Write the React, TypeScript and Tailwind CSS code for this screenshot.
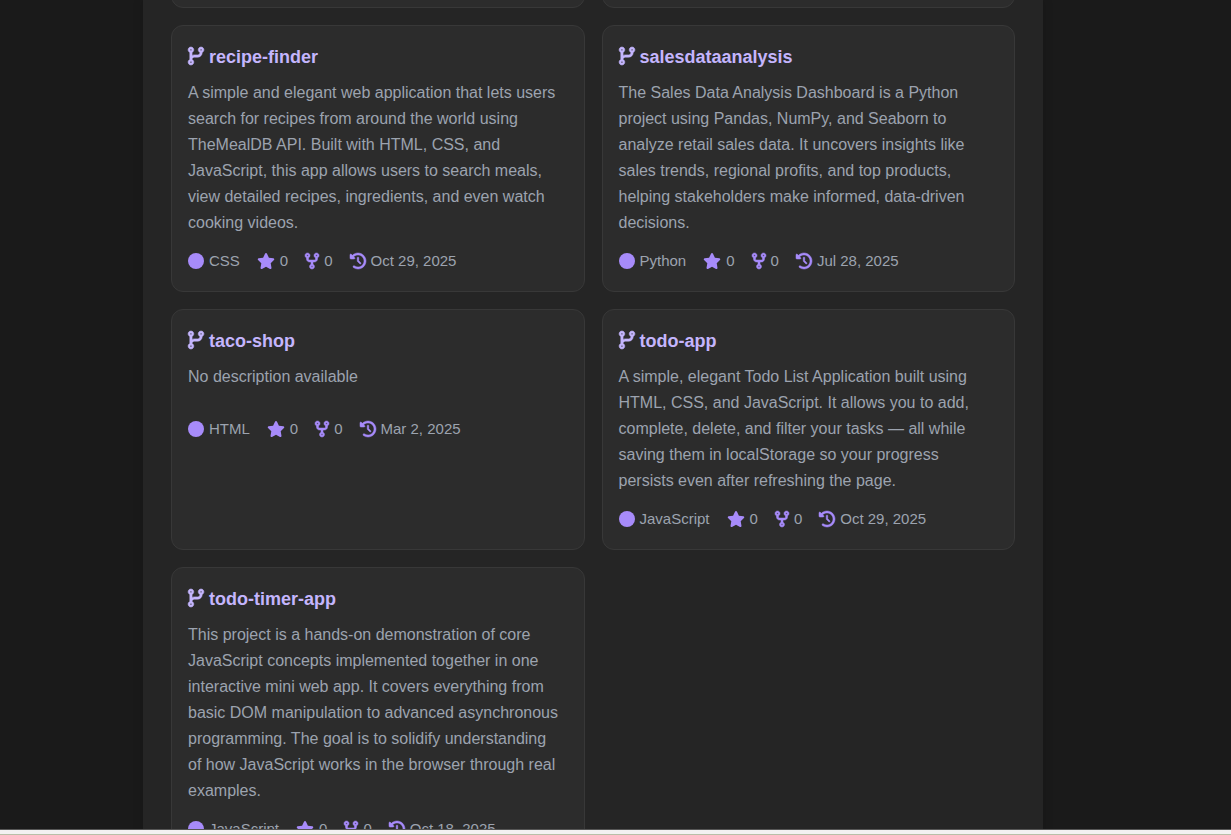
import {
  FaCircle,
  FaClockRotateLeft,
  FaCodeBranch,
  FaCodeFork,
  FaStar,
} from "react-icons/fa6";

type Repo = {
  name: string;
  description: string;
  language: string;
  stars: number;
  forks: number;
  updated: string;
};

const repos: Repo[] = [
  {
    name: "recipe-finder",
    description:
      "A simple and elegant web application that lets users search for recipes from around the world using TheMealDB API. Built with HTML, CSS, and JavaScript, this app allows users to search meals, view detailed recipes, ingredients, and even watch cooking videos.",
    language: "CSS",
    stars: 0,
    forks: 0,
    updated: "Oct 29, 2025",
  },
  {
    name: "salesdataanalysis",
    description:
      "The Sales Data Analysis Dashboard is a Python project using Pandas, NumPy, and Seaborn to analyze retail sales data. It uncovers insights like sales trends, regional profits, and top products, helping stakeholders make informed, data-driven decisions.",
    language: "Python",
    stars: 0,
    forks: 0,
    updated: "Jul 28, 2025",
  },
  {
    name: "taco-shop",
    description: "No description available",
    language: "HTML",
    stars: 0,
    forks: 0,
    updated: "Mar 2, 2025",
  },
  {
    name: "todo-app",
    description:
      "A simple, elegant Todo List Application built using HTML, CSS, and JavaScript. It allows you to add, complete, delete, and filter your tasks — all while saving them in localStorage so your progress persists even after refreshing the page.",
    language: "JavaScript",
    stars: 0,
    forks: 0,
    updated: "Oct 29, 2025",
  },
  {
    name: "todo-timer-app",
    description:
      "This project is a hands-on demonstration of core JavaScript concepts implemented together in one interactive mini web app. It covers everything from basic DOM manipulation to advanced asynchronous programming. The goal is to solidify understanding of how JavaScript works in the browser through real examples.",
    language: "JavaScript",
    stars: 0,
    forks: 0,
    updated: "Oct 18, 2025",
  },
];

function RepoCard({ repo }: { repo: Repo }) {
  return (
    <article className="rounded-xl border border-[#383838] bg-[#2c2c2c] px-4 pt-4 pb-[17px]">
      <h3 className="mb-2 text-lg leading-[30px] font-bold text-[#c4b5fd]">
        <a href={`#${repo.name}`} className="flex items-center gap-[5px]">
          <FaCodeBranch
            aria-hidden="true"
            strokeWidth={16}
            className="mb-[2px] h-[18px] w-4 shrink-0 overflow-visible"
          />
          {repo.name}
        </a>
      </h3>
      <p className="mb-3 min-h-10 pr-1 text-base leading-[26px] text-[#9ca3af]">
        {repo.description}
      </p>
      <ul className="flex flex-wrap gap-[17px] text-[15px] leading-[26px] text-[#9ca3af]">
        <li className="flex items-center gap-[5px]">
          <FaCircle aria-hidden="true" className="size-4 text-[#a78bfa]" />
          {repo.language}
        </li>
        <li className="flex items-center gap-[5px]" aria-label="Stars">
          <FaStar aria-hidden="true" className="h-4 w-[18px] text-[#a78bfa]" />
          {repo.stars}
        </li>
        <li className="flex items-center gap-[5px]" aria-label="Forks">
          <FaCodeFork
            aria-hidden="true"
            strokeWidth={16}
            className="h-4 w-[14px] overflow-visible text-[#a78bfa]"
          />
          {repo.forks}
        </li>
        <li className="flex items-center gap-[5px]" aria-label="Last updated">
          <FaClockRotateLeft
            aria-hidden="true"
            strokeWidth={16}
            className="size-4 overflow-visible text-[#a78bfa]"
          />
          {repo.updated}
        </li>
      </ul>
    </article>
  );
}

export default function App() {
  return (
    <div className="flex h-screen flex-col bg-[#1a1a1a] font-['Liberation_Sans',Arial,sans-serif]">
      <div className="min-h-0 grow overflow-hidden pr-[45px]">
        <main className="mx-auto min-h-full max-w-[900px] bg-[#252525] px-7 shadow-[0_0_10px_rgba(0,0,0,0.15)]">
          <div className="flex h-2 items-end gap-[17px]" aria-hidden="true">
            <div className="h-10 flex-1 rounded-xl border border-[#383838] bg-[#2c2c2c]" />
            <div className="h-10 flex-1 rounded-xl border border-[#383838] bg-[#2c2c2c]" />
          </div>
          <div className="mt-[17px] grid grid-cols-2 gap-[17px]">
            {repos.map((repo) => (
              <RepoCard key={repo.name} repo={repo} />
            ))}
          </div>
        </main>
      </div>
      <footer className="h-[6px] shrink-0 border-t border-b border-t-[#555555] border-b-[#b8c0a8] bg-[#f3f1f1]" />
    </div>
  );
}
